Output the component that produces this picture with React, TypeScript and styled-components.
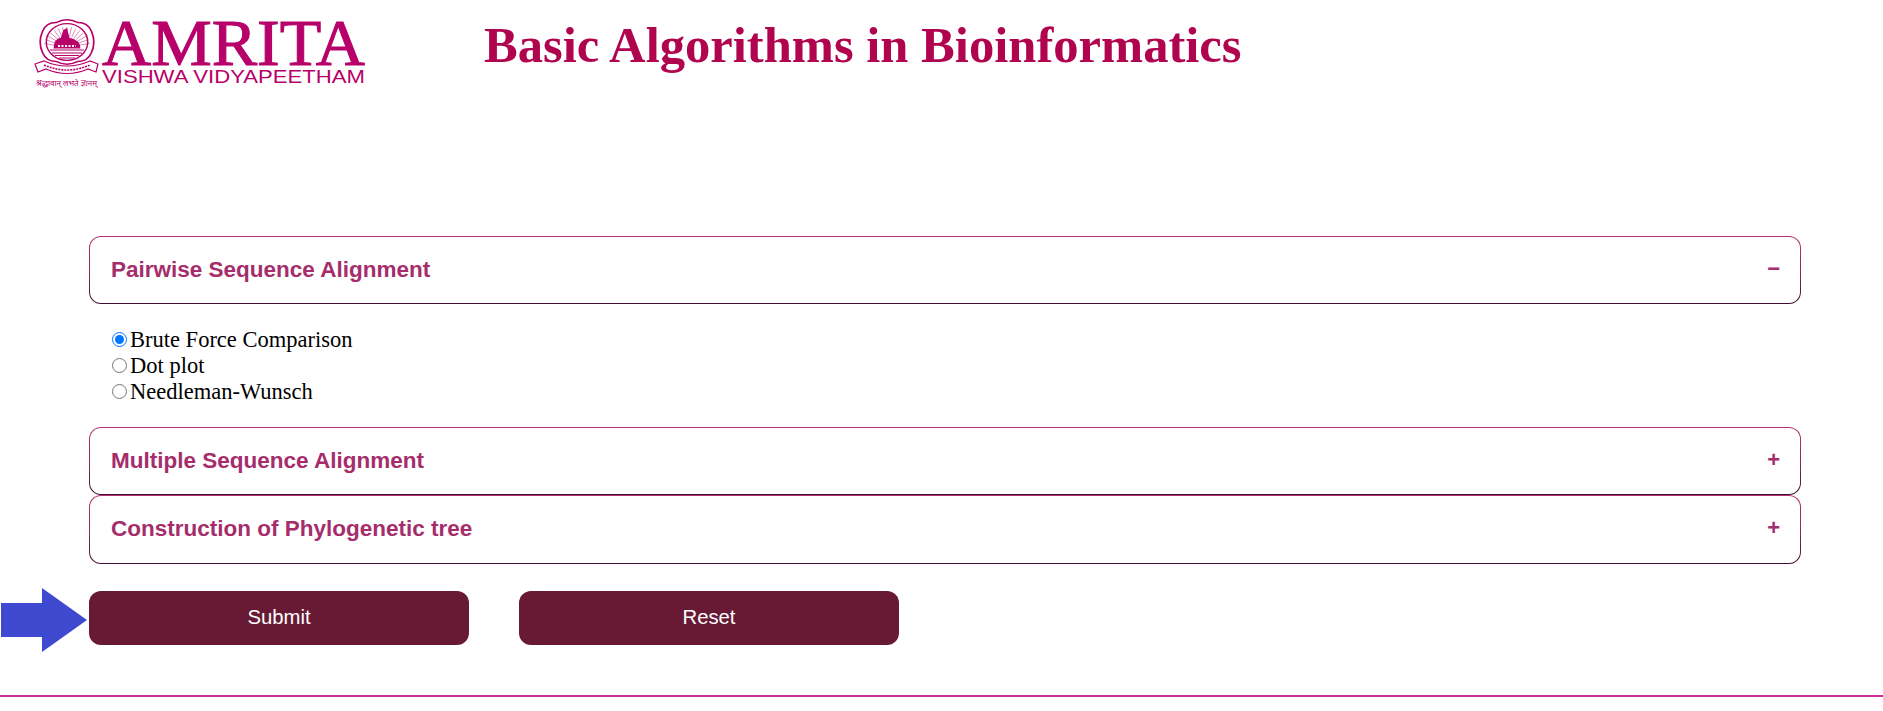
import React from "react";
import styled, { createGlobalStyle } from "styled-components";

const Global = createGlobalStyle`
  html, body { margin: 0; padding: 0; background: #fff; }
  body { font-family: "Liberation Serif", "Times New Roman", serif; overflow: hidden; }
`;

const Page = styled.div`
  width: 1883px;
  height: 711px;
  display: flex;
  flex-direction: column;
`;

const Header = styled.header`
  display: flex;
  align-items: flex-start;
  height: 236px;
  padding-left: 34px;
  box-sizing: border-box;
`;

const LogoSvg = styled.svg`
  display: block;
  width: 336px;
  height: 92px;
  flex: none;
`;

const Title = styled.h1`
  margin: 16px 0 0 114px;
  font-family: "Liberation Serif", "Times New Roman", serif;
  font-size: 50.6px;
  line-height: 58px;
  font-weight: 700;
  color: #b0044f;
`;

const Main = styled.main`
  margin: 0 82px 0 89px;
`;

const Panel = styled.section`
  display: flex;
  flex-direction: column;
`;

const AccordionHead = styled.button`
  display: flex;
  align-items: center;
  justify-content: space-between;
  width: 100%;
  height: ${(p) => p.$h ?? 68}px;
  padding: 0 20px 1px 21px;
  box-sizing: border-box;
  border: 1px solid transparent;
  border-radius: 12px;
  background: linear-gradient(#fff, #fff) padding-box,
    linear-gradient(#b5316f 0%, #8f2a62 50%, #3f1030 100%) border-box;
  font-family: "Liberation Sans", Arial, sans-serif;
  font-weight: 700;
  font-size: 22.5px;
  color: #a52d6b;
  cursor: pointer;
`;

const Sign = styled.span`
  font-size: 22px;
  line-height: 1;
  position: relative;
  top: -1px;
`;

const Options = styled.div`
  display: flex;
  flex-direction: column;
  padding: 23px 0 22px 23px;
`;

const OptionRow = styled.label`
  display: flex;
  align-items: center;
  height: 26px;
  font-size: 22.5px;
  line-height: 26px;
  color: #000;
`;

const Radio = styled.input`
  width: 15px;
  height: 15px;
  margin: 0 3px 2px 0;
  flex: none;
`;

const Actions = styled.div`
  display: flex;
  gap: 50px;
  margin-top: 27px;
  position: relative;
`;

const ActionButton = styled.button`
  width: 380px;
  height: 54px;
  padding: 0 0 2px;
  border: none;
  border-radius: 12px;
  background: #681a35;
  color: #fff;
  font-family: "Liberation Sans", Arial, sans-serif;
  font-size: 20.3px;
`;

const Pointer = styled.svg`
  position: absolute;
  left: -89px;
  top: -3px;
  width: 88px;
  height: 64px;
`;

const Rule = styled.hr`
  margin: 50px 0 0;
  height: 2px;
  border: none;
  background: #c9309b;
`;

const PINK = "#b8006a";

function Emblem() {
  const rays = Array.from({ length: 15 }, (_, i) => {
    const a = (Math.PI * (i + 1)) / 16;
    return (
      <line
        key={i}
        x1={67 - Math.cos(a) * 10}
        y1={46 - Math.sin(a) * 10}
        x2={67 - Math.cos(a) * 19}
        y2={46 - Math.sin(a) * 19}
        stroke={PINK}
        strokeWidth={0.7}
        opacity={0.55}
      />
    );
  });
  return (
    <g>
      <g transform="translate(67 42) scale(1.22 1.08) translate(-67 -41)">
        <path
          d="M47 31 Q50 23 58 23 Q67 18 76 23 Q84 23 87 31 Q91 41 87 51 Q84 59 76 59 Q67 64 58 59 Q50 59 47 51 Q43 41 47 31Z"
          fill="none"
          stroke={PINK}
          strokeWidth="1.4"
        />
        <circle cx="67" cy="41" r="17" fill="none" stroke={PINK} strokeWidth="1.2" />
        {rays}
        <path d="M56 47 Q56 38 62 37 L64 30 L67 28 L69 37 Q78 39 78 47Z" fill={PINK} />
      </g>
      <path d="M58 46 H76" stroke="#fff" strokeWidth="2" strokeDasharray="2 1.5" />
      <path d="M50 50 H84 M52 53 H82 M55 55.5 H79 M59 58 H75" stroke={PINK} strokeWidth="1.2" />
      <path d="M35 64 L44 61 Q67 71 90 61 L98 64 L96 72 L88 69 Q67 78 46 69 L38 72Z" fill="#fff" stroke={PINK} strokeWidth="1.2" />
      <path d="M44 65 Q67 75 90 65" fill="none" stroke={PINK} strokeWidth="1.6" strokeDasharray="2 1" />
      <text
        x="36"
        y="86"
        textLength="61"
        lengthAdjust="spacingAndGlyphs"
        fontSize="8"
        fill={PINK}
        fontFamily="'Noto Sans', 'DejaVu Sans', sans-serif"
      >
        श्रद्धावान् लभते ज्ञानम्
      </text>
    </g>
  );
}

function Logo() {
  return (
    <LogoSvg viewBox="34 0 336 92" role="img" aria-label="Amrita Vishwa Vidyapeetham">
      <Emblem />
      <text
        x="102"
        y="65"
        textLength="263"
        lengthAdjust="spacingAndGlyphs"
        fontFamily="'Liberation Serif', serif"
        fontSize="65"
        fill={PINK}
        stroke={PINK}
        strokeWidth="1"
      >
        AMRITA
      </text>
      <text
        x="102"
        y="83"
        textLength="263"
        lengthAdjust="spacingAndGlyphs"
        fontFamily="'Liberation Sans', sans-serif"
        fontSize="18"
        fill={PINK}
      >
        VISHWA VIDYAPEETHAM
      </text>
    </LogoSvg>
  );
}

const options = ["Brute Force Comparison", "Dot plot", "Needleman-Wunsch"];

export default function App() {
  return (
    <Page>
      <Global />
      <Header>
        <Logo />
        <Title>Basic Algorithms in Bioinformatics</Title>
      </Header>
      <Main>
        <Panel>
          <AccordionHead type="button">
            Pairwise Sequence Alignment
            <Sign>−</Sign>
          </AccordionHead>
          <Options>
            {options.map((o, i) => (
              <OptionRow key={o}>
                <Radio type="radio" name="algo" defaultChecked={i === 0} />
                {o}
              </OptionRow>
            ))}
          </Options>
          <AccordionHead type="button">
            Multiple Sequence Alignment
            <Sign>+</Sign>
          </AccordionHead>
          <AccordionHead type="button" $h={69}>
            Construction of Phylogenetic tree
            <Sign>+</Sign>
          </AccordionHead>
        </Panel>
        <Actions>
          <Pointer viewBox="0 0 88 64">
            <path d="M1 15 H42 V0 L87 32 L42 64 V49 H1Z" fill="#3f49cf" />
          </Pointer>
          <ActionButton type="button">Submit</ActionButton>
          <ActionButton type="button">Reset</ActionButton>
        </Actions>
      </Main>
      <Rule />
    </Page>
  );
}
